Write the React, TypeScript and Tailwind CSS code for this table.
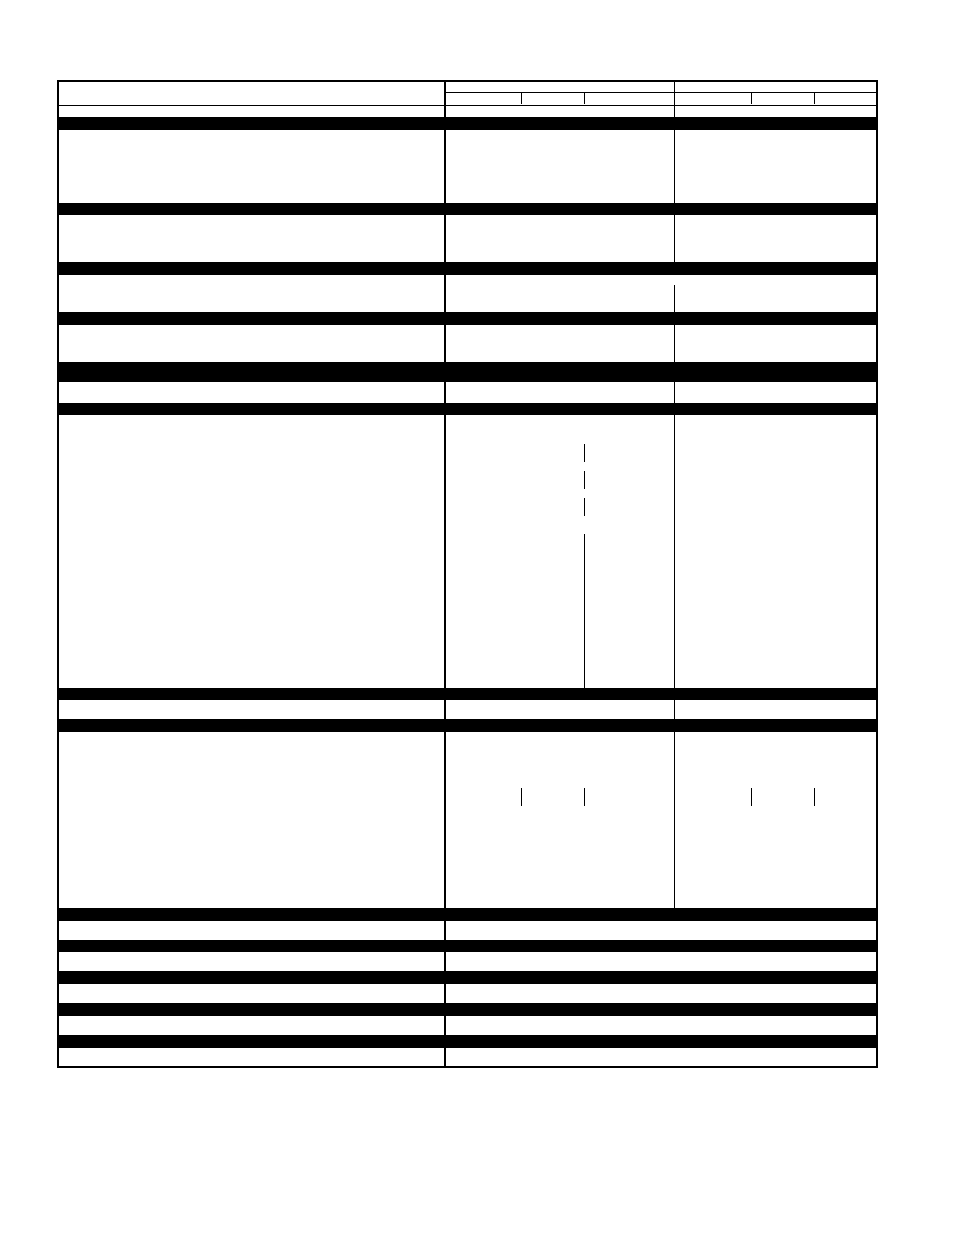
import React from "react";

type RowProps = {
  h: string;
  split?: boolean;
  g1?: React.ReactNode;
  g2?: React.ReactNode;
  divider?: React.ReactNode;
};

const Bar = ({ h }: { h: string }) => <div className={`${h} bg-black`} />;

const Row = ({ h, split = true, g1, g2, divider }: RowProps) => (
  <div className={`flex ${h}`}>
    <div className="w-[385px]" />
    <div className="w-[2px] bg-black" />
    {split ? (
      <>
        <div className="flex w-[228px] flex-col">{g1}</div>
        {divider ?? <div className="w-px bg-black" />}
        <div className="flex flex-1 flex-col">{g2}</div>
      </>
    ) : (
      <div className="flex-1" />
    )}
  </div>
);

// sub-column cells, first group: 75 | 62 | rest ; second group: 76 | 62 | rest
const SubCols1 = ({ h }: { h: string }) => (
  <div className={`flex ${h}`}>
    <div className="w-[75px]" />
    <div className="w-[63px] border-l border-black" />
    <div className="flex-1 border-l border-black" />
  </div>
);

const SubCols2 = ({ h }: { h: string }) => (
  <div className={`flex ${h}`}>
    <div className="w-[76px]" />
    <div className="w-[63px] border-l border-black" />
    <div className="flex-1 border-l border-black" />
  </div>
);

const HeaderGroup = ({ sub }: { sub: React.ReactNode }) => (
  <>
    <div className="h-[11px] border-b border-black" />
    {sub}
  </>
);

export default function App() {
  return (
    <div className="min-h-[1235px] bg-white pt-[80px]">
      <div className="ml-[57px] w-[821px] border-2 border-black">
        {/* header */}
        <Row
          h="h-[23px]"
          g1={<HeaderGroup sub={<SubCols1 h="h-[11px]" />} />}
          g2={<HeaderGroup sub={<SubCols2 h="h-[11px]" />} />}
        />
        <div className="h-px bg-black" />
        <Row h="h-[11px]" />
        <Bar h="h-[13px]" />
        <Row h="h-[73px]" />
        <Bar h="h-[12px]" />
        <Row h="h-[47px]" />
        <Bar h="h-[13px]" />
        <Row
          h="h-[37px]"
          divider={
            <div className="flex w-px flex-col">
              <div className="h-[10px]" />
              <div className="flex-1 bg-black" />
            </div>
          }
        />
        <Bar h="h-[13px]" />
        <Row h="h-[37px]" />
        <Bar h="h-[20px]" />
        <Row h="h-[21px]" />
        <Bar h="h-[12px]" />
        <Row
          h="h-[273px]"
          g1={
            <div className="flex flex-1">
              <div className="w-[138px]" />
              <div className="flex w-px flex-col">
                <div className="h-[29px]" />
                <div className="h-[18px] bg-black" />
                <div className="h-[9px]" />
                <div className="h-[18px] bg-black" />
                <div className="h-[9px]" />
                <div className="h-[18px] bg-black" />
                <div className="h-[18px]" />
                <div className="flex-1 bg-black" />
              </div>
              <div className="flex-1" />
            </div>
          }
        />
        <Bar h="h-[12px]" />
        <Row h="h-[19px]" />
        <Bar h="h-[13px]" />
        <Row
          h="h-[176px]"
          g1={
            <div className="pt-[56px]">
              <SubCols1 h="h-[18px]" />
            </div>
          }
          g2={
            <div className="pt-[56px]">
              <SubCols2 h="h-[18px]" />
            </div>
          }
        />
        <Bar h="h-[13px]" />
        <Row h="h-[19px]" split={false} />
        <Bar h="h-[12px]" />
        <Row h="h-[19px]" split={false} />
        <Bar h="h-[13px]" />
        <Row h="h-[19px]" split={false} />
        <Bar h="h-[13px]" />
        <Row h="h-[19px]" split={false} />
        <Bar h="h-[13px]" />
        <Row h="h-[18px]" split={false} />
      </div>
    </div>
  );
}
